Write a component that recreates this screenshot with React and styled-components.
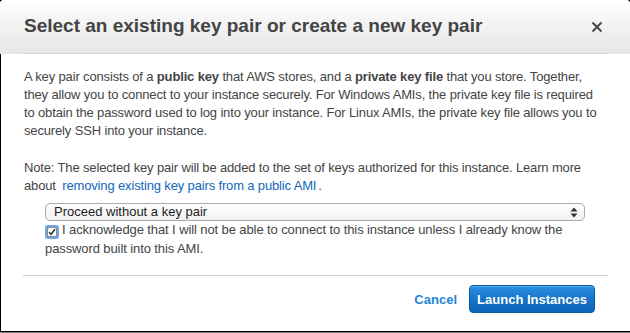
import React, { useState } from 'react';
import styled, { createGlobalStyle } from 'styled-components';

const GlobalStyle = createGlobalStyle`
  html, body {
    margin: 0;
    padding: 0;
    background: #000;
  }
  * {
    box-sizing: border-box;
  }
`;

const Page = styled.div`
  height: 333px;
  width: 630px;
  background: #000;
  border-bottom: 1px solid #7d7d7d;
  font-family: "Liberation Sans", Arial, sans-serif;
`;

const Modal = styled.div`
  height: 331px;
  background: #fff;
  border-top-left-radius: 4px;
  border-top-right-radius: 4px;
  display: flex;
  flex-direction: column;
  overflow: hidden;
`;

const Header = styled.div`
  height: 54px;
  flex-shrink: 0;
  background: linear-gradient(to bottom, #ffffff 0%, #f4f4f4 40%, #e6e6e6 100%);
  padding: 0 23px;
`;

const HeaderInner = styled.div`
  height: 54px;
  display: flex;
  align-items: center;
  justify-content: space-between;
  border-bottom: 1px solid #d2d2d2;
  padding: 0 4px 0 1px;
`;

const Title = styled.h2`
  margin: 0;
  font-size: 19px;
  font-weight: bold;
  color: #444;
  padding-bottom: 1px;
`;

const Close = styled.button`
  border: 0;
  background: none;
  padding: 0;
  width: 12px;
  height: 12px;
  display: flex;
  cursor: pointer;
`;

const Body = styled.div`
  flex: 1;
  border-left: 1px solid #000;
  padding: 0 23px;
  display: flex;
  flex-direction: column;
`;

const Content = styled.div`
  padding: 14px 0 0 0;
  color: #444;
  font-size: 13px;
  line-height: 18px;
`;

const Para = styled.p`
  margin: 0 0 19px 0;
  width: 600px;
  white-space: nowrap;
  letter-spacing: -0.15px;
`;

const Link = styled.a`
  color: #1166bb;
  text-decoration: none;
  padding: 0 2px 0 3px;
`;

const FormGroup = styled.div`
  padding-left: 21px;
  margin-top: -11px;
`;

const Select = styled.div`
  width: 540px;
  height: 18px;
  border: 1px solid #a9a9a9;
  border-radius: 5px;
  background: linear-gradient(to bottom, #ffffff, #f1f1f1);
  display: flex;
  align-items: center;
  justify-content: space-between;
  padding: 0 6px 0 8px;
  font-size: 13px;
  color: #222;
  line-height: 16px;
`;

const Ack = styled.label`
  display: block;
  margin-top: -1px;
  width: 540px;
  line-height: 19px;
  color: #444;
  letter-spacing: -0.1px;
  cursor: pointer;
`;

const Check = styled.span`
  display: inline-flex;
  align-items: center;
  justify-content: center;
  width: 14px;
  height: 14px;
  vertical-align: -2px;
  margin-right: 3px;
  border-radius: 3px;
  background: #6fa6e8;
  padding: 2px;
`;

const CheckInner = styled.span`
  width: 10px;
  height: 10px;
  background: #fff;
  border: 1px solid #8a8a8a;
  border-radius: 2px;
  display: flex;
  align-items: center;
  justify-content: center;
`;

const Divider = styled.hr`
  border: 0;
  border-top: 1px solid #cfcfcf;
  margin: 17px -1px 0 -1px;
`;

const Footer = styled.div`
  display: flex;
  justify-content: flex-end;
  align-items: center;
  gap: 12px;
  padding: 9px 12px 0 0;
`;

const CancelButton = styled.button`
  border: 0;
  background: none;
  padding: 0;
  font-family: inherit;
  font-size: 13px;
  font-weight: bold;
  color: #2584d4;
  cursor: pointer;
`;

const PrimaryButton = styled.button`
  width: 126px;
  height: 28px;
  border: 1px solid #0b5ba6;
  border-radius: 4px;
  background: linear-gradient(to bottom, #2a90e2 0%, #1674c8 50%, #0c63b5 100%);
  color: #fff;
  font-family: inherit;
  font-size: 13px;
  font-weight: bold;
  cursor: pointer;
  box-shadow: inset 0 1px 0 rgba(255, 255, 255, 0.25);
`;

function CloseIcon() {
  return (
    <svg width="12" height="12" viewBox="0 0 12 12">
      <path d="M1.5 1.5 L10.5 10.5 M10.5 1.5 L1.5 10.5" stroke="#444" strokeWidth="1.8" />
    </svg>
  );
}

function SelectArrows() {
  return (
    <svg width="8" height="11" viewBox="0 0 8 11">
      <path d="M4 0.5 L7.5 4.5 L0.5 4.5 Z" fill="#333" />
      <path d="M4 10.5 L7.5 6.5 L0.5 6.5 Z" fill="#333" />
    </svg>
  );
}

function CheckMark() {
  return (
    <svg width="8" height="8" viewBox="0 0 8 8">
      <path d="M1 4.2 L3.1 6.3 L7 1.3" stroke="#333" strokeWidth="1.6" fill="none" />
    </svg>
  );
}

export default function App() {
  const [acked, setAcked] = useState(true);

  return (
    <Page>
      <GlobalStyle />
      <Modal>
        <Header>
          <HeaderInner>
            <Title>Select an existing key pair or create a new key pair</Title>
            <Close aria-label="Close">
              <CloseIcon />
            </Close>
          </HeaderInner>
        </Header>
        <Body>
          <Content>
            <Para>
              A key pair consists of a <b>public key</b> that AWS stores, and a <b>private key file</b> that you
              store. Together,
              <br />
              they allow you to connect to your instance securely. For Windows AMIs, the private key file is required
              <br />
              to obtain the password used to log into your instance. For Linux AMIs, the private key file allows you to
              <br />
              securely SSH into your instance.
            </Para>
            <Para>
              Note: The selected key pair will be added to the set of keys authorized for this instance. Learn more
              <br />
              about <Link href="#">removing existing key pairs from a public AMI</Link>.
            </Para>
            <FormGroup>
              <Select>
                <span>Proceed without a key pair</span>
                <SelectArrows />
              </Select>
              <Ack onClick={() => setAcked(!acked)}>
                <Check>
                  <CheckInner>{acked ? <CheckMark /> : null}</CheckInner>
                </Check>
                I acknowledge that I will not be able to connect to this instance unless I already know the
                password built into this AMI.
              </Ack>
            </FormGroup>
          </Content>
          <Divider />
          <Footer>
            <CancelButton>Cancel</CancelButton>
            <PrimaryButton>Launch Instances</PrimaryButton>
          </Footer>
        </Body>
      </Modal>
    </Page>
  );
}
